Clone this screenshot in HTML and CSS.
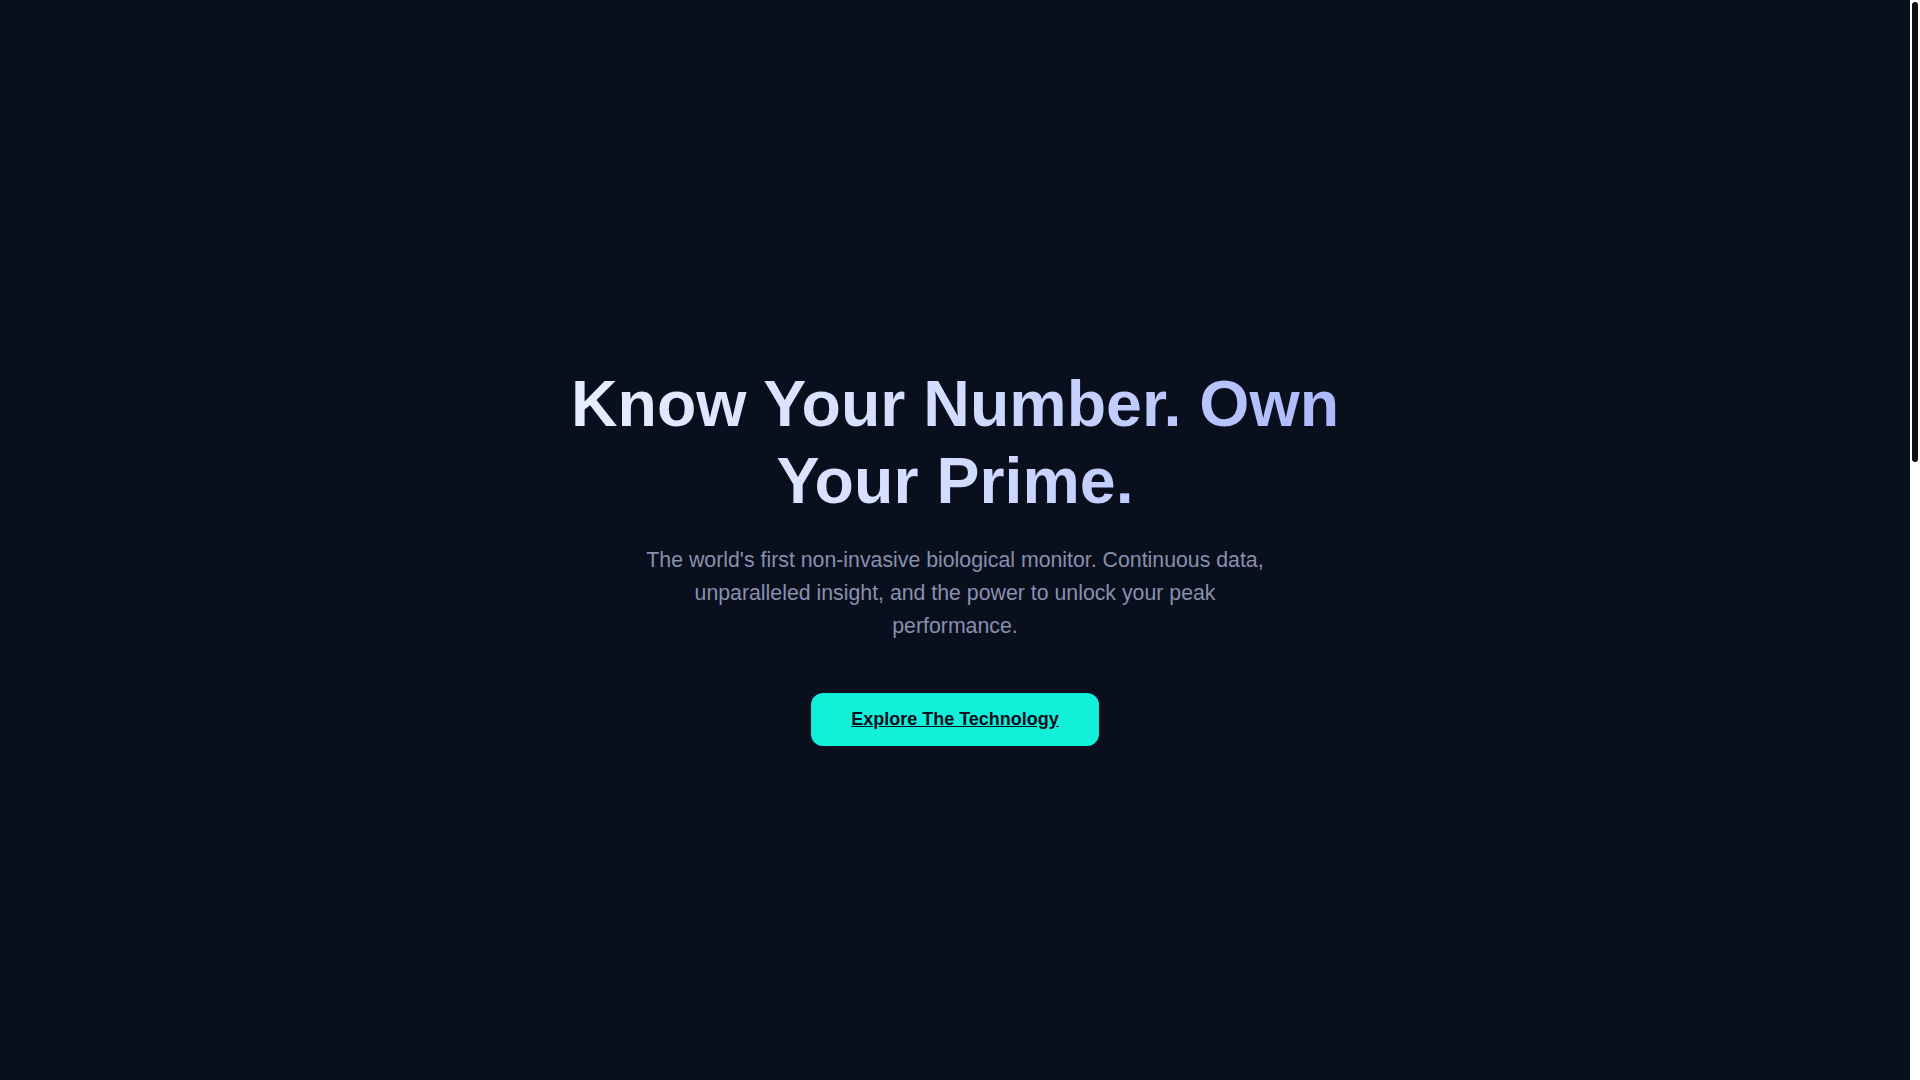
FILE: index.html
```html
<!DOCTYPE html>
<html lang="en">
<head>
<meta charset="utf-8">
<title>Know Your Number. Own Your Prime.</title>
<link rel="stylesheet" href="styles.css">
</head>
<body>
<div class="frame">
  <main class="page">
    <section class="hero">
      <h1 class="hero-title">Know Your Number. Own Your Prime.</h1>
      <p class="hero-text">The world's first non-invasive biological monitor. Continuous data, unparalleled insight, and the power to unlock your peak performance.</p>
      <a class="hero-btn" href="#technology">Explore The Technology</a>
    </section>
  </main>
  <div class="scrollbar" aria-hidden="true"><div class="scrollbar-thumb"></div></div>
</div>
</body>
</html>
```
FILE: styles.css
```css
html,
body {
  margin: 0;
  height: 100%;
  overflow: hidden;
  background: #0a0f1d;
}
body {
  font-family: "Liberation Sans", Arial, sans-serif;
}
.frame {
  display: flex;
  height: 100vh;
}
.page {
  flex: 1;
  min-width: 0;
  background: #0a0f1d;
}
.scrollbar {
  width: 10px;
  flex: none;
  background: #ffffff;
  padding: 2px 2px 0 2px;
  box-sizing: border-box;
}
.scrollbar-thumb {
  width: 6px;
  height: 460px;
  background: #111111;
  border-radius: 3px;
}
.hero {
  height: 1080px;
  box-sizing: border-box;
  padding-top: 32px;
  display: flex;
  flex-direction: column;
  align-items: center;
  justify-content: center;
  text-align: center;
}
.hero-title {
  margin: 0;
  max-width: 800px;
  font-size: 64.5px;
  line-height: 1.2;
  font-weight: 700;
  background: linear-gradient(90deg, #e6eeff 0%, #d2dcff 50%, #aab7fd 100%);
  -webkit-background-clip: text;
  background-clip: text;
  color: transparent;
}
.hero-text {
  margin: 24px 0 0;
  max-width: 640px;
  font-size: 21.3px;
  line-height: 33px;
  color: #8890ae;
}
.hero-btn {
  margin-top: 50px;
  display: inline-block;
  padding: 16px 40px;
  border-radius: 12px;
  background: #12f0d9;
  color: #0a0f1d;
  font-size: 18px;
  line-height: 21px;
  font-weight: 700;
  text-decoration: underline;
}
```
